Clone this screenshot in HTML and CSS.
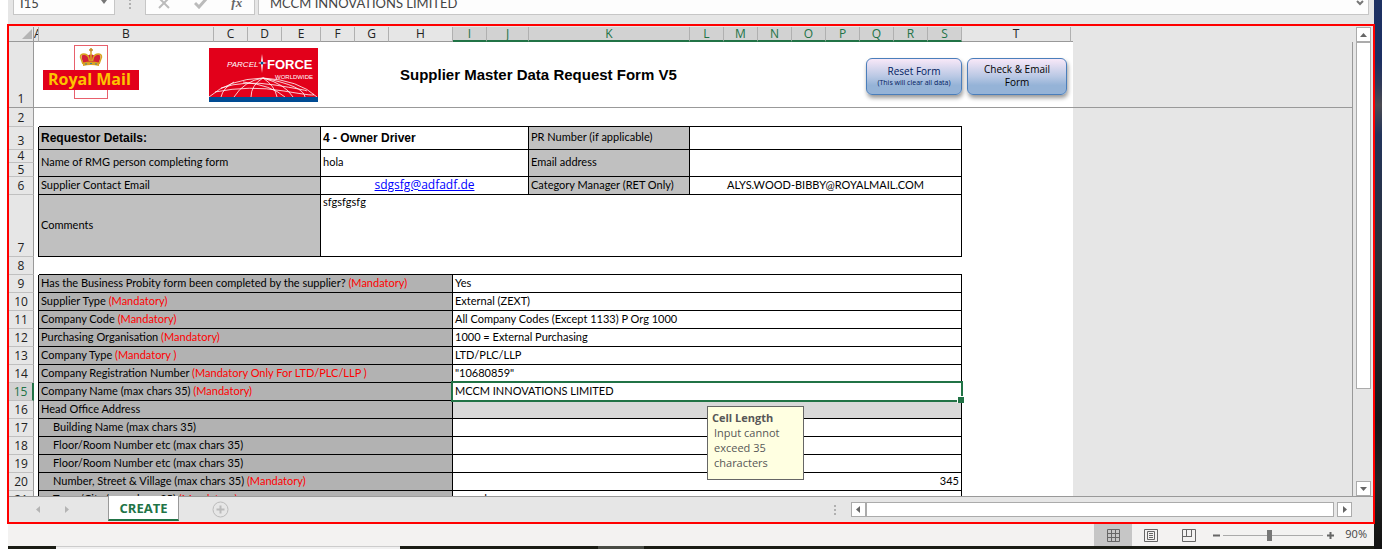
FILE: index.html
```html
<!DOCTYPE html>
<html lang="en">
<head>
<meta charset="utf-8">
<title>Supplier Master Data Request Form</title>
<link rel="stylesheet" href="styles.css">
</head>
<body>
<div class="desktop">
<div class="screen">
  <header class="formula-bar">
    <div class="name-box"><input class="name-input" aria-label="Name box" value="I15"><svg width="8" height="5" viewBox="0 0 8 5"><path d="M1 0h6L4 4z" fill="#777"/></svg></div>
    <span class="grip" aria-hidden="true"><i></i><i></i><i></i></span>
    <div class="formula-tools">
      <button aria-label="Cancel"><svg width="12" height="12" viewBox="0 0 12 12"><path d="M1 1l10 10M11 1L1 11" stroke="#bbb" stroke-width="2"/></svg></button>
      <button aria-label="Enter"><svg width="14" height="12" viewBox="0 0 14 12"><path d="M1 6l4 4 8-9" stroke="#bbb" stroke-width="3" fill="none"/></svg></button>
      <button class="fx" aria-label="Insert function">fx</button>
    </div>
    <div class="formula-box"><input class="formula-input" aria-label="Formula" value="MCCM INNOVATIONS LIMITED"><svg width="8" height="6" viewBox="0 0 8 6"><path d="M1 1l3 3 3-3" stroke="#777" stroke-width="2" fill="none"/></svg></div>
  </header>

  <main class="workbook">
    <div class="body">
      <div class="sheet">
        <table>
          <colgroup><col class="w-head"><col class="w-a"><col class="w-b"><col class="w-s"><col class="w-s"><col class="w-e"><col class="w-s"><col class="w-s"><col class="w-h"><col class="w-s"><col class="w-j"><col class="w-k"><col class="w-s"><col class="w-s"><col class="w-s"><col class="w-s"><col class="w-s"><col class="w-s"><col class="w-s"><col class="w-s"><col class="w-t"><col class="w-x"><col></colgroup>
          <thead><tr class="letters"><th class="corner"><svg width="10" height="10" viewBox="0 0 10 10"><path d="M10 0v10H0z" fill="#b4b4b4"/></svg></th><th class="a">A</th><th>B</th><th>C</th><th>D</th><th>E</th><th>F</th><th>G</th><th>H</th><th class="on">I</th><th class="on">J</th><th class="on">K</th><th class="on">L</th><th class="on">M</th><th class="on">N</th><th class="on">O</th><th class="on">P</th><th class="on">Q</th><th class="on">R</th><th class="on">S</th><th>T</th><td class="slim"></td><td class="void-head"></td></tr></thead>
          <tbody>
          <tr class="r1"><th>1</th><td></td><td colspan="20"><div class="banner">
            <svg class="royal" width="96" height="54" viewBox="0 0 96 54" role="img" aria-label="Royal Mail">
              <rect x="31.500" y=".5" width="33" height="53" fill="#fff" stroke="#e8606c"/>
              <path d="M40 19L38.500 12c0-3 4-4 6-1 1-2 6-2 7 0 2-3 6-2 6 1L56 19z" fill="#d2203a"/>
              <path d="M40 19L37.500 12c0-4 6-4 8 0M56 19L58.500 12c0-4-6-4-8 0M48 7v9M45.500 12l1 4M50.500 12l-1 4" fill="none" stroke="#d9a321" stroke-width="1.500"/>
              <path d="M40 17.500q8-2 16 0v3.500q-8-2-16 0z" fill="#d9a321"/><path d="M46 5h4M48 3v4" stroke="#c48a20" stroke-width="1.500"/>
              <path d="M42 19h2M47 18.500h2M52 19h2" stroke="#477a9a"/><rect y="25" width="96" height="20" fill="#e2001a"/>
              <text x="5" y="40" class="rm-text">Royal Mail</text>
            </svg>
            <svg class="parcel" width="109" height="54" viewBox="0 0 109 54" role="img" aria-label="Parcelforce Worldwide">
              <rect width="109" height="54" fill="#e2001a"/>
              <g fill="none" stroke="#fff" stroke-width=".8"><path d="M0 49Q20 31 54 30Q90 32 108 49M12 40Q35 32 66 37T98 43M25 49Q35 33 54 30M42 49Q42 37 54 30M68 49Q66 38 54 30M84 49Q76 36 54 30M6 44Q40 37 75 43T104 46M54 30Q95 38 96 49M34 34Q62 37 76 49M25 34Q14 40 12 49"/></g>
              <rect y="49" width="109" height="5" fill="#004b93"/>
              <text x="18" y="19" class="pf-small">PARCEL</text><text x="58" y="21" class="pf-big">FORCE</text><text x="66" y="31" class="pf-world">WORLDWIDE</text>
              <path d="M53 6l1 8 4 1-4 1-1 9-1-9-3-1 3-1z" fill="#fff"/><circle cx="53" cy="15" r="1.500" fill="#004b93"/>
            </svg>
            <h1>Supplier Master Data Request Form V5</h1>
            <div class="actions"><button class="reset">Reset Form<small>(This will clear all data)</small></button><button class="check">Check &amp; Email<br>Form</button></div>
          </div></td><td class="void"></td></tr>
          <tr class="r2"><th>2</th><td></td><td colspan="20" class="under"></td><td class="void"></td></tr>
          <tr class="r3"><th>3</th><td class="edge"></td><td colspan="4" class="f g b">Requestor Details:</td><td colspan="5" class="f b">4 - Owner Driver</td><td class="f g">PR Number (if applicable)</td><td colspan="8" class="f"></td><td></td><td></td><td class="void"></td></tr>
          <tr class="r4"><th>4</th><td class="edge"></td><td colspan="4" rowspan="2" class="f g">Name of RMG person completing form</td><td colspan="5" rowspan="2" class="f">hola</td><td rowspan="2" class="f g">Email address</td><td colspan="8" rowspan="2" class="f"></td><td></td><td></td><td class="void"></td></tr>
          <tr class="r5"><th>5</th><td class="edge"></td><td></td><td></td><td class="void"></td></tr>
          <tr><th>6</th><td class="edge"></td><td colspan="4" class="f g">Supplier Contact Email</td><td colspan="5" class="f c"><a href="mailto:sdgsfg@adfadf.de">sdgsfg@adfadf.de</a></td><td class="f g">Category Manager (RET Only)</td><td colspan="8" class="f c">ALYS.WOOD-BIBBY@ROYALMAIL.COM</td><td></td><td></td><td class="void"></td></tr>
          <tr class="r7"><th>7</th><td class="edge"></td><td colspan="4" class="f g">Comments</td><td colspan="14" class="f top">sfgsfgsfg</td><td></td><td></td><td class="void"></td></tr>
          <tr><th>8</th><td></td><td colspan="18" class="under"></td><td></td><td></td><td class="void"></td></tr>
          <tr><th>9</th><td class="edge"></td><td colspan="7" class="f d">Has the Business Probity form been completed by the supplier? <em>(Mandatory)</em></td><td colspan="11" class="f">Yes</td><td></td><td></td><td class="void"></td></tr>
          <tr><th>10</th><td class="edge"></td><td colspan="7" class="f d">Supplier Type <em>(Mandatory)</em></td><td colspan="11" class="f">External (ZEXT)</td><td></td><td></td><td class="void"></td></tr>
          <tr><th>11</th><td class="edge"></td><td colspan="7" class="f d">Company Code <em>(Mandatory)</em></td><td colspan="11" class="f">All Company Codes (Except 1133) P Org 1000</td><td></td><td></td><td class="void"></td></tr>
          <tr><th>12</th><td class="edge"></td><td colspan="7" class="f d">Purchasing Organisation <em>(Mandatory)</em></td><td colspan="11" class="f">1000 = External Purchasing</td><td></td><td></td><td class="void"></td></tr>
          <tr><th>13</th><td class="edge"></td><td colspan="7" class="f d">Company Type <em>(Mandatory )</em></td><td colspan="11" class="f">LTD/PLC/LLP</td><td></td><td></td><td class="void"></td></tr>
          <tr><th>14</th><td class="edge"></td><td colspan="7" class="f d">Company Registration Number <em>(Mandatory Only For LTD/PLC/LLP )</em></td><td colspan="11" class="f">"10680859"</td><td></td><td></td><td class="void"></td></tr>
          <tr><th class="on">15</th><td class="edge"></td><td colspan="7" class="f d">Company Name (max chars 35) <em>(Mandatory)</em></td><td colspan="11" class="f selected">MCCM INNOVATIONS LIMITED<span class="selection"></span><div class="tip" role="tooltip"><strong>Cell Length</strong><p>Input cannot exceed 35 characters</p></div></td><td></td><td></td><td class="void"></td></tr>
          <tr><th>16</th><td class="edge"></td><td colspan="7" class="f d">Head Office Address</td><td colspan="11" class="f l"></td><td></td><td></td><td class="void"></td></tr>
          <tr><th>17</th><td class="edge"></td><td colspan="7" class="f d in">Building Name (max chars 35)</td><td colspan="11" class="f"></td><td></td><td></td><td class="void"></td></tr>
          <tr><th>18</th><td class="edge"></td><td colspan="7" class="f d in">Floor/Room Number etc (max chars 35)</td><td colspan="11" class="f"></td><td></td><td></td><td class="void"></td></tr>
          <tr><th>19</th><td class="edge"></td><td colspan="7" class="f d in">Floor/Room Number etc (max chars 35)</td><td colspan="11" class="f"></td><td></td><td></td><td class="void"></td></tr>
          <tr><th>20</th><td class="edge"></td><td colspan="7" class="f d in">Number, Street &amp; Village (max chars 35) <em>(Mandatory)</em></td><td colspan="11" class="f r">345</td><td></td><td></td><td class="void"></td></tr>
          <tr><th>21</th><td class="edge"></td><td colspan="7" class="f d in">Town/City (max chars 35) <em>(Mandatory)</em></td><td colspan="11" class="f">sgsgsd</td><td></td><td></td><td class="void"></td></tr>
          </tbody>
        </table>
      </div>
      <div class="vscroll">
        <button aria-label="Scroll up"><svg width="7" height="4" viewBox="0 0 7 4"><path d="M3.500 0L7 4H0z" fill="#666"/></svg></button>
        <div class="vthumb"></div>
        <button class="down" aria-label="Scroll down"><svg width="7" height="4" viewBox="0 0 7 4"><path d="M3.500 4L7 0H0z" fill="#666"/></svg></button>
      </div>
    </div>
    <nav class="tabs">
      <button class="nav-btn" aria-label="Previous sheet"><svg width="4" height="7" viewBox="0 0 4 7"><path d="M0 3.500L4 0v7z" fill="#b4b4b4"/></svg></button>
      <button class="nav-btn" aria-label="Next sheet"><svg width="4" height="7" viewBox="0 0 4 7"><path d="M4 3.500L0 0v7z" fill="#b4b4b4"/></svg></button>
      <button class="tab">CREATE</button>
      <button class="add" aria-label="New sheet"><svg width="17" height="17" viewBox="0 0 17 17"><circle cx="8.500" cy="8.500" r="7.500" fill="none" stroke="#bbb"/><path d="M8.500 4.500v8M4.500 8.500h8" stroke="#bbb" stroke-width="2"/></svg></button>
      <div class="hscroll">
        <span class="grip" aria-hidden="true"><i></i><i></i><i></i></span>
        <button aria-label="Scroll left"><svg width="4" height="7" viewBox="0 0 4 7"><path d="M0 3.500L4 0v7z" fill="#666"/></svg></button>
        <div class="hthumb"></div>
        <button class="right" aria-label="Scroll right"><svg width="4" height="7" viewBox="0 0 4 7"><path d="M4 3.500L0 0v7z" fill="#666"/></svg></button>
      </div>
    </nav>
  </main>

  <footer class="status">
    <button class="view current" aria-label="Normal view"><svg width="13" height="13" viewBox="0 0 13 13"><path d="M.5.5h12v12H.5zM4.500 0v13M8.500 0v13M0 4.500h13M0 8.500h13" fill="none" stroke="#666"/></svg></button>
    <button class="view" aria-label="Page layout"><svg width="14" height="13" viewBox="0 0 14 13"><path d="M.5.5h13v12H.5zM3.500 2.500h7v8h-7zM5 4.500h4M5 6.500h4M5 8.500h4" fill="none" stroke="#666"/></svg></button>
    <button class="view" aria-label="Page break preview"><svg width="14" height="13" viewBox="0 0 14 13"><path d="M.5.5h13v12H.5zM4.500 1v7M9.500 1v7M0 7.500h10" fill="none" stroke="#666"/></svg></button>
    <button class="zoom-btn" aria-label="Zoom out"><svg width="7" height="7" viewBox="0 0 7 7"><path d="M0 3.500h7" stroke="#666" stroke-width="2"/></svg></button>
    <input class="zoom" type="range" min="10" max="190" value="92" aria-label="Zoom">
    <button class="zoom-btn" aria-label="Zoom in"><svg width="7" height="7" viewBox="0 0 7 7"><path d="M0 3.500h7M3.500 0v7" stroke="#666" stroke-width="2"/></svg></button>
    <span class="percent">90%</span>
  </footer>
  <div class="taskbar"><span class="dark start"></span><span class="light"></span><span class="dark app"></span><span class="glow"></span><span class="dark rest"></span></div>
</div>
</div>
</body>
</html>
```
FILE: styles.css
```css
* { box-sizing: border-box; }
body { margin: 0; background: #fff; font-family: "Open Sans", sans-serif; font-size: 12px; color: #444; overflow: hidden; }
button { margin: 0; padding: 0; border: 0; background: none; font: inherit; color: inherit; display: flex; align-items: center; justify-content: center; }
svg { display: block; flex: none; }
.desktop { display: flex; min-height: 100vh; padding: 0 8px; background: linear-gradient(90deg, #fff 8px, transparent 8px), linear-gradient(#1e3162 0, #1b2f63 60px, #303a58 85px, #4b4a50 105px, #22345c 135px, #2b3138 260px, #15181a 420px, #222 480px, #111 549px); }
.screen { flex: 1; min-width: 0; height: 100vh; display: flex; flex-direction: column; background: #e6e6e6; }

.formula-bar { flex: none; height: 32px; margin-top: -8px; padding: 0 5px 9px; display: flex; }
.formula-bar input { border: 0; outline: 0; background: none; padding: 0 0 2px; min-width: 0; flex: 1; height: 20px; color: #444; font: 13px Lato, sans-serif; }
.name-box, .formula-tools, .formula-box { border: 1px solid #c6c6c6; background: #fdfdfd; display: flex; align-items: center; }
.name-box { width: 102px; padding: 0 6px; }
.name-box svg, .formula-box svg { margin-bottom: 2px; }
.formula-tools button { margin-bottom: 1px; }
.grip { display: flex; flex-direction: column; gap: 2px; justify-content: center; width: 2px; }
.grip i { width: 2px; height: 2px; background: #b0b0b0; }
.formula-bar .grip { margin: 0 14px; }
.formula-tools { width: 110px; justify-content: space-around; }
.fx { font: italic bold 13px "Liberation Serif", serif; color: #666; }
.formula-box { flex: 1; margin-left: 3px; padding: 0 4px 0 11px; }

.workbook { flex: 1; min-height: 0; margin: 0 -1px; border: 2px solid #f00; display: flex; flex-direction: column; position: relative; background: #e6e6e6; }
.body { flex: 1; min-height: 0; display: flex; overflow: hidden; }
.sheet { flex: 1; min-width: 0; overflow: hidden; padding-top: 1px; }
table { width: 100%; table-layout: fixed; border-collapse: separate; border-spacing: 0; }
.w-head { width: 25px; } .w-a { width: 5px; } .w-b { width: 175px; } .w-s { width: 34px; } .w-e { width: 39px; } .w-h { width: 64px; } .w-j { width: 42px; } .w-k { width: 161px; } .w-t { width: 109px; } .w-x { width: 2px; }
tr { height: 18px; }
td { padding: 0 2px 2px; height: 18px; line-height: 14px; background: #fff; color: #000; font-family: Lato, sans-serif; font-size: 11px; white-space: nowrap; }
td:empty { padding: 0; line-height: 0; }
th { padding: 0 0 1px; font-weight: 400; color: #222; line-height: 14px; background: #e6e6e6; border-bottom: 1px solid #c0c0c0; border-right: 1px solid #999; vertical-align: bottom; }
.a { overflow: hidden; }
.letters, .letters th { height: 15px; line-height: 13px; padding: 0; }
.letters th { border-bottom-color: #999; border-right-color: #b0b0b0; vertical-align: top; }
.letters .corner { border-right-color: #999; }
.corner svg { margin: 2px 0 0 13px; }
.letters .on { background: #d2d2d2; color: #217346; border-bottom: 2px solid #217346; }
.letters td { height: 15px; border-bottom: 1px solid #999; }
.letters .slim { background: #e6e6e6; }
.letters .void-head { background: #e6e6e6; border-bottom: 0; }
tbody th.on { background: #d2d2d2; color: #217346; border-right: 2px solid #217346; }
.void { background: #e6e6e6; border-right: 1px solid #999; }
.r1, .r1 td { height: 66px; padding-bottom: 0; }
.r1 td { border-bottom: 1px solid #999; }
.r1 th { border-bottom-color: #999; }
.r2, .r2 td { height: 19px; }
.r3, .r3 td { height: 23px; }
.r4 { height: 13px; } .r4 td:not(.f) { height: 13px; }
.r5 { height: 14px; } .r5 td { height: 14px; }
.r4 th, .r5 th { line-height: 11px; }
.r7, .r7 td { height: 62px; }
.under { background: linear-gradient(#000, #000) left bottom / 923px 1px no-repeat #fff; }
.edge { border-right: 1px solid #000; }
.f { border-right: 1px solid #000; border-bottom: 1px solid #000; }
.g { background: #c0c0c0; }
.d { background: #b2b2b2; }
.l { background: #d9d9d9; }
.b { font: bold 12px/14px "Liberation Sans", sans-serif; padding-bottom: 0; }
.c { text-align: center; } .r { text-align: right; }
.top { vertical-align: top; }
.in { padding-left: 14px; }
.f em { font-style: normal; color: #f00; }
.f a { color: #00f; font-family: "Open Sans", sans-serif; font-size: 12px; }

.banner { display: flex; align-items: center; height: 65px; padding: 0 4px 0 2px; }
.royal { margin-bottom: 6px; }
.parcel { margin-left: 70px; }
.rm-text { font: bold 16px "Open Sans", sans-serif; fill: #fdc300; }
.pf-small { font: italic 8px "Liberation Sans", sans-serif; fill: #fff; }
.pf-big { font: bold 13px "Liberation Sans", sans-serif; fill: #fff; }
.pf-world { font: 6px "Liberation Sans", sans-serif; fill: #fff; }
.banner h1 { margin: 0 0 0 82px; font: bold 15px/16px "Liberation Sans", sans-serif; }
.actions { margin: 3px 0 0 auto; display: flex; gap: 5px; }
.actions button { flex-direction: column; border: 1px solid #4a7ebb; border-radius: 6px; background: linear-gradient(#f8e8f8, #b9c8e4 50%, #95b3d7 75%); box-shadow: 1px 3px 4px #999; font: 10px/13px "Open Sans", sans-serif; height: 37px; width: 100px; color: #000; }
.actions .reset { width: 96px; color: #002060; }
.reset small { font-size: 7px; line-height: 10px; }

.selected { position: relative; }
.selection { position: absolute; inset: -2px -2px -2px -2px; border: 2px solid #217346; }
.selection::after { content: ""; position: absolute; right: -3px; bottom: -3px; width: 6px; height: 6px; background: #217346; border: 1px solid #fff; border-width: 1px 0 0 1px; }
.tip { position: absolute; z-index: 2; left: 254px; top: 23px; width: 97px; height: 74px; padding: 4px; border: 1px solid #666; background: #ffffe1; color: #575757; font: 11px/15px "Open Sans", sans-serif; white-space: normal; }
.tip strong { display: block; line-height: 14px; }
.tip p { margin: 0 0 0 2px; }

.vscroll { flex: none; width: 20px; padding: 1px 2px 0 3px; display: flex; flex-direction: column; }
.vscroll button, .hscroll button { flex: none; width: 15px; height: 15px; border: 1px solid #ababab; background: #fff; }
.vthumb { flex: 0 0 74%; min-height: 0; background: #fff; border: 1px solid #ababab; }
.vscroll .down { margin-top: auto; }

.tabs { flex: none; height: 26px; display: flex; border-top: 1px solid #999; padding-right: 21px; }
.nav-btn { width: 29px; }
.nav-btn:first-child { margin-left: 14px; }
.tab { width: 71px; height: 25px; margin: -1px 0 0 27px; border: 1px solid #999; border-top: 0; border-bottom: 2px solid #217346; background: #fff; color: #217346; font-weight: 700; font-size: 13px; }
.add { width: 82px; }
.hscroll { flex: none; display: flex; align-items: center; width: 38.6%; margin-left: auto; }
.hscroll .grip { margin-right: 15px; }
.hthumb { flex: 1; height: 15px; background: #fff; border: 1px solid #ababab; margin-right: 3px; }

.status { flex: none; height: 22px; display: flex; justify-content: flex-end; align-items: stretch; padding-right: 7px; background: #f3f2f1; }
.view { width: 38px; }
.current { background: #c6c6c6; }
.zoom-btn { width: 7px; }
.view + .zoom-btn { margin-left: 5px; }
.zoom { appearance: none; width: 100px; height: 1px; margin: auto 4px auto 3px; background: #aaa; }
.zoom::-webkit-slider-thumb { appearance: none; width: 5px; height: 11px; background: #777; }
.percent { font-size: 11px; line-height: 20px; margin-left: 11px; }
.taskbar { flex: none; height: 3px; display: flex; }
.dark { background: #1a1c14; }
.start { width: 48px; } .light { width: 344px; background: #f0f0f0; border-top: 1px solid #ccc; } .app { width: 198px; } .glow { width: 46px; background: #484b44; } .rest { flex: 1; }
```
